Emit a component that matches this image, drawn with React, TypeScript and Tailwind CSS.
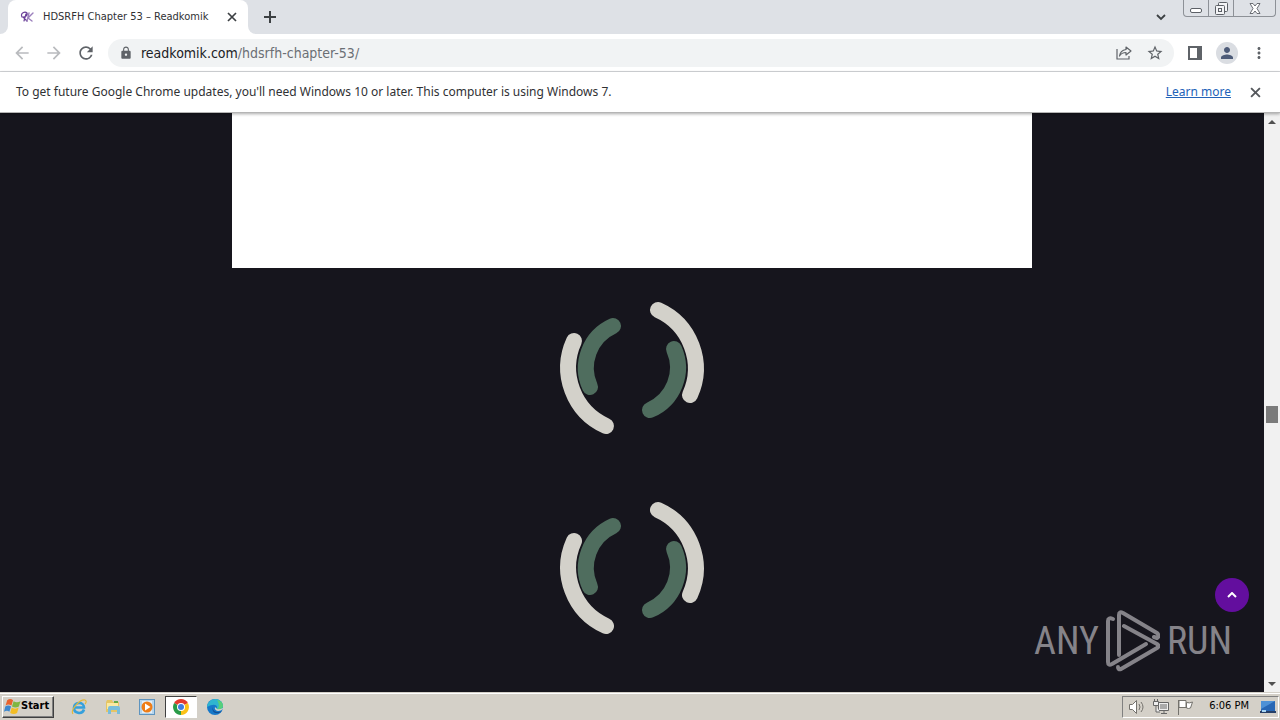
import type { ReactNode } from "react"
import { MdArrowBack, MdArrowForward, MdLock, MdMoreVert, MdPerson, MdRefresh, MdStarBorder } from "react-icons/md"

const loaders = [1, 2]

function CloseIcon({ className }: { className: string }) {
  return (
    <svg viewBox="0 0 10 10" className={className} fill="none" stroke="currentColor" strokeWidth="1.7">
      <path d="M1 1l8 8M9 1L1 9" />
    </svg>
  )
}

function TabStrip() {
  return (
    <div className="flex h-[34px] bg-[#dee1e6]">
      <div className="flex w-2 shrink-0 bg-white">
        <div className="flex-1 rounded-br-lg bg-[#dee1e6]" />
      </div>
      <div className="flex w-60 shrink-0 items-center rounded-t-lg bg-white pr-[11px] pl-3">
        <svg viewBox="0 0 14 12" className="h-3 w-[14px]" fill="none" strokeLinecap="round">
          <path d="M4 10L6 3M2 6C0 2 5 0 7 2c1 3-2 4-4 4l4 4" stroke="#6a3f98" strokeWidth="1.2" />
          <path d="M9 2L7 10M13 2L8 7l4 3" stroke="#9c80bd" strokeWidth="1.4" />
        </svg>
        <span className="ml-[9px] flex-1 text-[11px] whitespace-nowrap">HDSRFH Chapter 53 – Readkomik</span>
        <button aria-label="Close tab" className="text-[#3c4043]">
          <CloseIcon className="size-[10px]" />
        </button>
      </div>
      <div className="w-2 shrink-0 bg-white">
        <div className="h-full rounded-bl-lg bg-[#dee1e6]" />
      </div>
      <button aria-label="New tab" className="flex w-7 items-center justify-center text-[#3c4043]">
        <svg viewBox="0 0 12 12" className="size-3" stroke="currentColor" strokeWidth="2">
          <path d="M6 0v12M0 6h12" />
        </svg>
      </button>
      <div className="flex-1" />
      <button aria-label="Search tabs" className="mr-4 w-3 text-[#3c4043]">
        <svg viewBox="0 0 12 8" className="h-2 w-3" fill="none" stroke="currentColor" strokeWidth="1.8">
          <path d="M2 2l4 4 4-4" />
        </svg>
      </button>
      <div className="mr-1 flex h-[17px] rounded-b-[4px] border border-t-0 border-[#8d9197] text-[#5c6066]">
        <button aria-label="Minimize" className="flex w-[25px] items-end justify-center border-r border-[#8d9197] pb-[3px]">
          <svg viewBox="0 0 12 5" className="h-[5px] w-3" fill="#fff" stroke="currentColor">
            <rect x=".5" y=".5" width="11" height="4" rx="1.5" />
          </svg>
        </button>
        <button aria-label="Restore" className="flex w-[25px] items-center justify-center border-r border-[#8d9197]">
          <svg viewBox="0 0 13 13" className="size-[13px]" fill="#f3f4f6" stroke="currentColor">
            <rect x="3.5" y=".5" width="9" height="9" rx="1" />
            <rect x=".5" y="3.5" width="9" height="9" rx="1" />
            <rect x="3.5" y="6.5" width="3" height="3" />
          </svg>
        </button>
        <button aria-label="Close window" className="flex w-[41px] items-center justify-center">
          <svg viewBox="0 0 12 11" className="h-[11px] w-3" fill="#fff" stroke="currentColor" strokeWidth=".9">
            <path d="M1 .5h3l2 2.5 2-2.5h3L8 5.500l3 5H8L6 8l-2 2.500H1l3-5z" />
          </svg>
        </button>
      </div>
    </div>
  )
}

function Toolbar() {
  return (
    <div className="flex h-[38px] items-center border-b border-[#d5d7da] px-3 text-[#5f6368]">
      <button aria-label="Back" className="text-[#b9bbbe]"><MdArrowBack className="size-5" /></button>
      <button aria-label="Forward" className="ml-3 text-[#b9bbbe]"><MdArrowForward className="size-5" /></button>
      <button aria-label="Reload" className="ml-3"><MdRefresh className="size-5" /></button>
      <div className="ml-3 flex h-7 flex-1 items-center rounded-full bg-[#f1f3f4] pr-[10px] pl-[11px]">
        <MdLock className="size-[14px] shrink-0" />
        <label className="relative ml-2 flex-1 text-sm">
          <input
            aria-label="Address"
            defaultValue="readkomik.com/hdsrfh-chapter-53/"
            className="w-full bg-transparent text-transparent caret-black outline-none"
          />
          <span aria-hidden="true" className="pointer-events-none absolute inset-0 text-[#6b6f74]">
            <span className="text-[#202124]">readkomik.com</span>/hdsrfh-chapter-53/
          </span>
        </label>
        <button aria-label="Share">
          <svg viewBox="0 0 16 16" className="size-4" fill="none" stroke="currentColor" strokeWidth="1.2">
            <path d="M1 4v10h12v-3" />
            <path d="M10 2l5 4-5 4V7.500C7 7.500 5 8.500 3.500 11 4 7 6.500 5 10 4.500z" strokeLinejoin="round" />
          </svg>
        </button>
        <button aria-label="Bookmark" className="ml-[14px]"><MdStarBorder className="size-[18px]" /></button>
      </div>
      <button aria-label="Side panel" className="ml-[14px]">
        <svg viewBox="0 0 14 14" className="size-[14px]">
          <rect x="1" y="1" width="12" height="12" fill="#fff" stroke="currentColor" strokeWidth="2" />
          <path d="M9 1h4v12H9z" fill="currentColor" />
        </svg>
      </button>
      <button aria-label="Profile" className="ml-[14px] flex size-[22px] items-center justify-center rounded-full bg-[#dadde2] text-[#4d5b78]">
        <MdPerson className="size-[18px]" />
      </button>
      <button aria-label="Menu" className="ml-3"><MdMoreVert className="size-[18px]" /></button>
    </div>
  )
}

function Infobar() {
  return (
    <div className="z-10 flex h-[41px] items-center border-b border-[#b5b5b5] bg-white pr-[19px] pl-4 font-['Noto_Sans',sans-serif] text-xs shadow-[0_1px_3px_#0005]">
      <p className="flex-1">To get future Google Chrome updates, you'll need Windows 10 or later. This computer is using Windows 7.</p>
      <a href="#learn" className="text-[#2262b8] underline">Learn more</a>
      <button aria-label="Dismiss" className="ml-[19px] text-[#55585c]"><CloseIcon className="size-[11px]" /></button>
    </div>
  )
}

function Loader() {
  return (
    <div className="flex h-[200px] items-center justify-center">
      <svg viewBox="-80 -80 160 160" className="size-40" fill="none" strokeWidth="16" strokeLinecap="round">
        <path d="M26 -58A64 64 0 0 1 58 27M-26 58A64 64 0 0 1 -58 -27" stroke="#d3d1ca" />
        <path d="M42 -19A46 46 0 0 1 18 42M-42 19A46 46 0 0 1 -19 -42" stroke="#4f6d5e" />
      </svg>
    </div>
  )
}

function Watermark() {
  return (
    <div className="absolute right-8 bottom-[19px] flex h-16 items-center gap-[7px] font-['Roboto_Condensed',Roboto,sans-serif] text-[38px] text-[#858389]">
      <span>ANY</span>
      <svg viewBox="0 0 54 62" className="h-[62px] w-[54px]" fill="none" stroke="currentColor" strokeWidth="4" strokeLinejoin="round" strokeLinecap="round">
        <path d="M13 45V5q0-4 4-2L51 23q3 3 0 5l-3-1" />
        <path d="M18 16L51 34q3 2 0 4L15 59q-3 1-3-2" />
        <path d="M7 9Q2 7 2 11v41q0 4 4 2L40 34" />
      </svg>
      <span>RUN</span>
    </div>
  )
}

function Scrollbar() {
  return (
    <div className="flex w-4 shrink-0 flex-col items-center bg-[#f1f1f1]">
      <button aria-label="Scroll up" className="flex h-[17px] items-center">
        <svg viewBox="0 0 8 4" className="h-1 w-2" fill="#505050"><path d="M0 4l4-4 4 4z" /></svg>
      </button>
      <div className="grow-[277]" />
      <div className="h-[17px] w-3 bg-[#7b7b7b]" />
      <div className="grow-[252]" />
      <button aria-label="Scroll down" className="flex h-[17px] items-center">
        <svg viewBox="0 0 8 4" className="h-1 w-2" fill="#505050"><path d="M0 0l4 4 4-4z" /></svg>
      </button>
    </div>
  )
}

function TaskButton({ label, active, children }: { label: string; active?: boolean; children: ReactNode }) {
  return (
    <button
      aria-label={label}
      className={
        active
          ? "flex h-[22px] w-8 items-center justify-center border border-t-[#404040] border-r-white border-b-white border-l-[#404040] bg-white"
          : "flex h-[22px] w-8 items-center justify-center"
      }
    >
      <svg viewBox="0 0 16 16" className="size-4">{children}</svg>
    </button>
  )
}

function Taskbar() {
  return (
    <div className="flex h-7 items-center border-t border-[#d4d0c8] bg-[#d4d0c8] pl-[2px] shadow-[inset_0_1px_0_#fff]">
      <button className="flex h-[22px] w-[52px] items-center border border-t-white border-r-[#404040] border-b-[#404040] border-l-white pl-px text-[11px] font-bold text-black shadow-[inset_-1px_-1px_0_#808080]">
        <svg viewBox="0 0 16 16" className="size-[17px] shrink-0">
          <path d="M3 2q3-2 5.500 0L7 7Q4 5 1.500 7z" fill="#e8622d" />
          <path d="M9 3q3 2 6.500 0L14 8q-3 2-6.500 0z" fill="#7fb642" />
          <path d="M1.200 8Q4 6 6.700 8L5 13Q3 11 0 13z" fill="#3d87ce" />
          <path d="M7.300 9q3 2 6.500 0l-1.500 5q-3 2-6.500 0z" fill="#f3bd25" />
        </svg>
        Start
      </button>
      <div className="ml-[9px] flex gap-[2px]">
        <TaskButton label="Internet Explorer">
          <path d="M13 10.500C11 16 2.500 14.500 3 8.500 3.500 2.500 13 2.500 13 8.500H4" fill="none" stroke="#35a0dc" strokeWidth="2.600" />
          <path d="M2 15C-1 11 9 0 14 1c2 1 1 3 0 4" fill="none" stroke="#e4b83a" strokeWidth="1.200" />
        </TaskButton>
        <TaskButton label="Explorer">
          <path d="M1 3l1-2h5l1 2h6v10H1z" fill="#e5c565" />
          <path d="M2 4h11v6H2z" fill="#fae9a2" />
          <path d="M9 2h4v2H9z" fill="#61a949" />
          <path d="M3 15V9q0-2 2-2h8q2 0 2 2v6h-3v-4H6v4z" fill="#79bddb" />
        </TaskButton>
        <TaskButton label="Media Player">
          <rect x=".5" y=".5" width="15" height="15" fill="#b5d5ed" stroke="#5e94bf" />
          <rect x="3" y="2" width="10" height="12" fill="#e3eef7" />
          <circle cx="8" cy="8" r="5.500" fill="#ee7d17" />
          <path d="M6 4.500L11.500 8 6 11.500z" fill="#fff" />
        </TaskButton>
        <TaskButton label="Chrome" active>
          <path d="M8 8L1.100 4A8 8 0 0 1 14.900 4z" fill="#e33b2e" />
          <path d="M8 8L14.900 4A8 8 0 0 1 8 16z" fill="#fbc116" />
          <path d="M8 8v8A8 8 0 0 1 1.100 4z" fill="#299b48" />
          <circle cx="8" cy="8" r="4" fill="#fff" />
          <circle cx="8" cy="8" r="3" fill="#3f7de0" />
        </TaskButton>
        <TaskButton label="Edge">
          <circle cx="8" cy="8" r="8" fill="#1678c9" />
          <path d="M0 8C1-2 15-3 16 7c0 4-5 5-7 3 3-3-1-7-9-2z" fill="#2fb5d0" />
          <path d="M10 1q6 1 6 6c0 3-4 4-6 3 3-2 2-6 0-9z" fill="#58cf7b" />
          <path d="M6 8c-1 5 5 6 9 4l-1 1C9 16 4 13 6 8z" fill="#124f96" />
          <path d="M8 8q-1 3 3 4 3 0 5-2v-1q-4 2-6 1z" fill="#d4d0c8" />
        </TaskButton>
      </div>
      <div className="flex-1" />
      <div className="mr-px flex h-[22px] items-center border border-t-[#808080] border-r-white border-b-white border-l-[#808080] pr-[2px] pl-[6px] text-[11px] text-black">
        <svg viewBox="0 0 16 16" className="size-4" fill="#fff" stroke="#74726d">
          <path d="M.5 5.500h3l4-4v13l-4-4h-3z" />
          <path d="M10 5q2 3 0 6M12 3q4 5 0 10" fill="none" />
        </svg>
        <svg viewBox="0 0 16 16" className="ml-2 size-4" fill="#eee" stroke="#666">
          <path d="M5.500 3.500h10v8h-10zM8 14.500h6M11 12v2" />
          <path d="M7 5h7v5H7z" fill="#aaa" stroke="none" />
          <path d="M.5 2.500h5v4h-5zM1.500 0v2M4.500 0v2M3 7v6h4" />
        </svg>
        <svg viewBox="0 0 16 16" className="ml-2 size-4" fill="#fff" stroke="#74726d">
          <path d="M1.500 1v15M2 1.500h7v7H2zM9.500 3.500q3 1 6-.5l-2 6q-2 1-4 0z" />
        </svg>
        <time className="ml-4">6:06 PM</time>
        <svg viewBox="0 0 16 14" className="ml-[11px] h-[14px] w-4">
          <path d="M1 1h14v10H1z" fill="#2867b5" />
          <path d="M1 1h14L1 9z" fill="#4e91d6" />
          <path d="M0 11h16v2H0z" fill="#263f67" />
          <path d="M2 10h4v2H2z" fill="#a6d5f5" />
        </svg>
      </div>
    </div>
  )
}

export default function App() {
  return (
    <div className="flex min-h-screen flex-col bg-white font-['DejaVu_Sans_Condensed','Noto_Sans',sans-serif] text-[#303134]">
      <TabStrip />
      <Toolbar />
      <Infobar />
      <div className="flex flex-1">
        <main className="relative flex-1 bg-[#16151d]">
          <div className="mx-auto h-[155px] max-w-[800px] bg-white" />
          {loaders.map(loader => (
            <Loader key={loader} />
          ))}
          <Watermark />
          <button aria-label="Back to top" className="absolute right-[15px] bottom-20 flex size-[34px] items-center justify-center rounded-full bg-[#630e9e] text-white">
            <svg viewBox="0 0 10 6" className="h-[6px] w-[10px]" fill="none" stroke="currentColor" strokeWidth="2">
              <path d="M1 5l4-4 4 4" />
            </svg>
          </button>
        </main>
        <Scrollbar />
      </div>
      <Taskbar />
    </div>
  )
}
